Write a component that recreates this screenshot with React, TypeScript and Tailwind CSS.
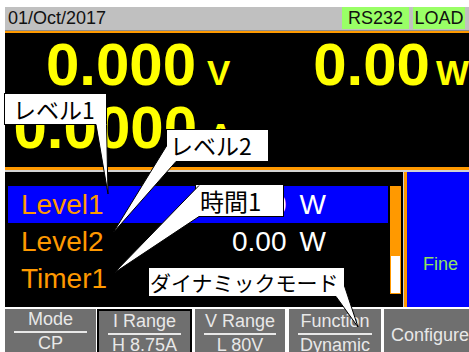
const rows = [
  { label: "Level1", value: "0.00", unit: "W", active: true },
  { label: "Level2", value: "0.00", unit: "W", active: false },
  { label: "Timer1", value: "", unit: "", active: false },
];

function SoftKey({ top, bottom, className }: { top: string; bottom: string; className: string }) {
  return (
    <div className={`h-[52px] shrink-0 bg-[#6f6f6f] text-center text-[18px] leading-[20px] text-[#e8e8e8] ${className}`}>
      <div>{top}</div>
      <div className="mx-[9px] mt-[2px] h-[2px] bg-[#e8e8e8]" />
      <div>{bottom}</div>
    </div>
  );
}

export default function App() {
  return (
    <div className="relative h-[352px] w-[469px] overflow-hidden bg-white font-['Liberation_Sans',Arial,sans-serif]">
      <div className="ml-[5px] mt-[7px] w-[464px]">
        {/* status bar */}
        <div className="flex h-[23px] items-center bg-[#c0c0c0] pr-[4px]">
          <span className="pl-[3px] text-[18px] text-[#111]">01/Oct/2017</span>
          <div className="ml-auto flex gap-[4px] self-start">
            <span className="flex h-[22px] w-[67px] items-center justify-center bg-[#99ff66] text-[18px] text-[#111]">RS232</span>
            <span className="flex h-[22px] w-[52px] items-center justify-center bg-[#99ff66] text-[18px] text-[#111]">LOAD</span>
          </div>
        </div>
        <div className="h-px bg-[#8c8c8c]" />
        <div className="h-[2px] bg-[#ff9900]" />

        {/* readings */}
        <div className="h-[134px] bg-black font-bold text-[#ffff00]">
          <div className="flex h-[63px] items-baseline leading-[63px]">
            <span className="w-[192px] text-right text-[60px]">0.000</span>
            <span className="ml-[11px] w-[40px] text-[35px]">V</span>
            <span className="w-[184px] text-right text-[60px]">0.00</span>
            <span className="ml-[6px] text-[35px]">W</span>
          </div>
          <div className="flex h-[63px] items-baseline leading-[63px]">
            <span className="w-[192px] text-right text-[60px]">0.0000</span>
            <span className="ml-[11px] w-[40px] text-[35px]">A</span>
          </div>
        </div>
        <div className="h-[3px] bg-[#ff9900]" />
        <div className="h-[2px] bg-[#d4d4d4]" />

        {/* settings list */}
        <div className="flex h-[135px]">
          <div className="flex w-[398px] items-start gap-[2px] bg-black pl-[3px] pt-[14px]">
            <div className="w-[380px]">
              {rows.map((r) => (
                <div
                  key={r.label}
                  className={`flex h-[37px] items-center text-[28px] leading-[37px] ${r.active ? "bg-[#0000ff]" : ""}`}
                >
                  <span className="w-[224px] pl-[13px] text-[#ff9900]">{r.label}</span>
                  <span className="text-white">{r.value}</span>
                  <span className="ml-[13px] text-white">{r.unit}</span>
                </div>
              ))}
            </div>
            <div className="h-[108px] w-[11px] border border-[#ff9900] bg-white">
              <div className="h-[69px] bg-[#ff9900]" />
            </div>
          </div>
          <div className="w-px bg-[#cfcfcf]" />
          <div className="w-[3px] bg-[#ff9900]" />
          <div className="flex-1 bg-[#0000ff] pl-[16px] pt-[82px] text-[18px] leading-[20px] text-[#90e060]">Fine</div>
        </div>

        {/* soft keys */}
        <div className="mt-[2px] flex">
          <SoftKey top="Mode" bottom="CP" className="w-[91px]" />
          <SoftKey top="I Range" bottom="H 8.75A" className="ml-px w-[95px] border-2 border-black" />
          <SoftKey top="V Range" bottom="L 80V" className="ml-[3px] w-[90px] pt-[2px]" />
          <SoftKey top="Function" bottom="Dynamic" className="ml-[4px] w-[92px] pt-[2px]" />
          <div className="ml-[3px] flex h-[52px] w-[92px] shrink-0 items-center justify-center bg-[#6f6f6f] text-[18px] leading-[20px] text-[#e8e8e8]">
            Configure
          </div>
        </div>
      </div>

      {/* callouts */}
      <div className="absolute left-[4px] top-[93px] flex h-[32px] w-[103px] items-center border border-black bg-white pl-[8px] font-['Noto_Sans_CJK_JP',sans-serif] text-[23px] leading-none text-black">
        レベル1
      </div>
      <div className="absolute left-[166px] top-[129px] flex h-[33px] w-[103px] items-center border border-black bg-white pl-[3px] font-['Noto_Sans_CJK_JP',sans-serif] text-[23px] leading-none text-black">
        レベル2
      </div>
      <div className="absolute left-[195px] top-[184px] flex h-[33px] w-[89px] items-center border border-black bg-white pl-[4px] font-['Noto_Sans_CJK_JP',sans-serif] text-[24px] leading-none text-black">
        時間1
      </div>
      <div className="absolute left-[148px] top-[267px] flex h-[30px] w-[197px] items-center border border-black bg-white pl-[1px] font-['Noto_Sans_CJK_JP',sans-serif] text-[21px] leading-none text-black">
        ダイナミックモード
      </div>

      <svg className="pointer-events-none absolute left-0 top-0" width="469" height="352">
        <g fill="white" stroke="none">
          <polygon points="96,124 108,194 106.5,124" />
          <polygon points="166.5,146 113,233 176,161.5" />
          <polygon points="199,185.5 114,273 199,216.5" />
          <polygon points="336,296.5 358,327 344.5,286" />
        </g>
        <g fill="none" stroke="black" strokeWidth="1">
          <polyline points="96,124.5 108,194 106.5,124.5" />
          <polyline points="166.5,146 113,233 176,161.5" />
          <polyline points="199,185.5 114,273 199,216.5" />
          <polyline points="336,296.5 358,327 344.5,286" />
        </g>
      </svg>
    </div>
  );
}
